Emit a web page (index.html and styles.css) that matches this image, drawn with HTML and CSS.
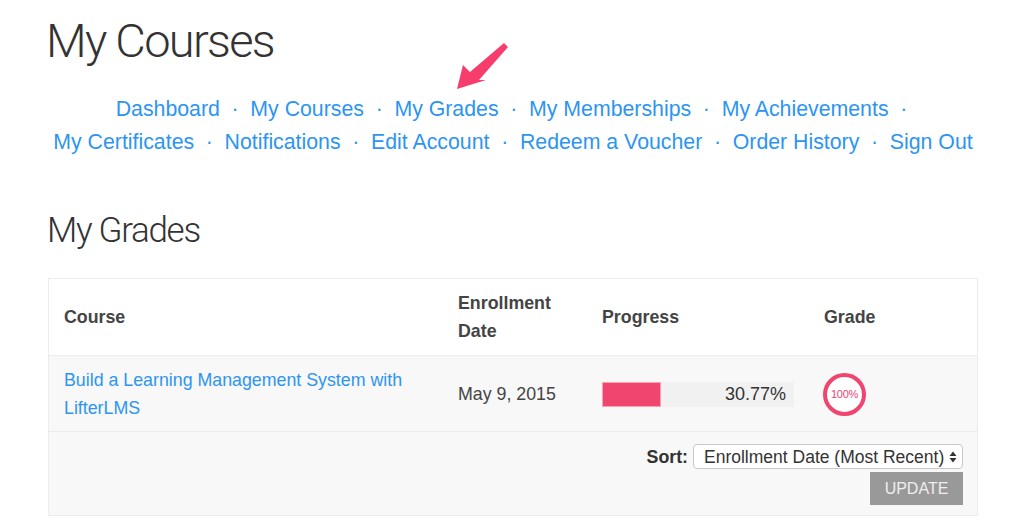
FILE: index.html
```html
<!DOCTYPE html>
<html>
<head>
<meta charset="utf-8">
<link rel="stylesheet" href="styles.css">
</head>
<body>
<div class="page">
  <h1 class="title">My Courses</h1>
  <nav class="nav">
    <a href="#">Dashboard</a><span class="sep">·</span><a href="#">My Courses</a><span class="sep">·</span><a href="#">My Grades</a><span class="sep">·</span><a href="#">My Memberships</a><span class="sep">·</span><a href="#">My Achievements</a><span class="sep sep-end">·</span><br>
    <a href="#">My Certificates</a><span class="sep">·</span><a href="#">Notifications</a><span class="sep">·</span><a href="#">Edit Account</a><span class="sep">·</span><a href="#">Redeem a Voucher</a><span class="sep">·</span><a href="#">Order History</a><span class="sep">·</span><a href="#">Sign Out</a>
  </nav>
  <h2 class="subtitle">My Grades</h2>
  <table class="grades">
    <thead>
      <tr>
        <th class="c-course">Course</th>
        <th class="c-date">Enrollment Date</th>
        <th class="c-progress">Progress</th>
        <th class="c-grade">Grade</th>
      </tr>
    </thead>
    <tbody>
      <tr>
        <td><a href="#">Build a Learning Management System with LifterLMS</a></td>
        <td>May 9, 2015</td>
        <td>
          <div class="bar"><div class="fill" style="width:30.77%"></div><span class="pct">30.77%</span></div>
        </td>
        <td><div class="ring">100%</div></td>
      </tr>
    </tbody>
    <tfoot>
      <tr>
        <td colspan="4">
          <div class="sortrow">
            <span class="sortlabel">Sort:</span>
            <span class="selectwrap">
              <select class="select"><option>Enrollment Date (Most Recent)</option></select>
              <svg class="updown" width="8" height="12" viewBox="0 0 8 12"><path d="M4 0.5 L7.5 5 H0.5 Z M4 11.5 L7.5 7 H0.5 Z" fill="#333"/></svg>
            </span>
          </div>
          <div class="btnrow"><button class="update">UPDATE</button></div>
        </td>
      </tr>
    </tfoot>
  </table>
</div>
<svg class="arrow" width="1024" height="120" viewBox="0 0 1024 120">
  <polygon points="457,89 463,65 470,72 504,43 508,47 479,80 486,80" fill="#f73d6c"/>
</svg>
</body>
</html>
```
FILE: styles.css
```css
html, body {
  margin: 0;
  padding: 0;
  background: #fff;
}
body {
  font-family: "Liberation Sans", Arial, sans-serif;
  color: #444;
  position: relative;
}
.page {
  width: 930px;
  margin-left: 48px;
  padding-top: 12px;
}
.title {
  font-family: Roboto, "Liberation Sans", sans-serif;
  font-weight: 300;
  font-size: 47px;
  line-height: 58px;
  margin: 0 0 23px -2px;
  color: #333;
  letter-spacing: -1.7px;
}
.nav {
  text-align: center;
  font-size: 21.3px;
  line-height: 33px;
}
.nav a {
  color: #2d95f1;
  text-decoration: none;
}
.sep {
  color: #2d95f1;
  padding: 0 11.7px;
}
.sep-end {
  padding-right: 3px;
}
.subtitle {
  font-family: Roboto, "Liberation Sans", sans-serif;
  font-weight: 300;
  font-size: 35px;
  line-height: 44px;
  margin: 50px 0 25px -1px;
  color: #333;
  letter-spacing: -1.3px;
}
.grades {
  width: 930px;
  border-collapse: collapse;
  border: 1px solid #ececec;
  font-size: 17.8px;
  line-height: 28px;
}
.grades th {
  text-align: left;
  font-weight: bold;
  padding: 10px 15px;
  height: 56px;
  background: #fff;
  color: #444;
}
.c-course { width: 364px; }
.c-date { width: 114px; }
.c-progress { width: 190px; }
.grades tbody td {
  background: #f8f8f8;
  padding: 10px 15px 9px;
  border-top: 1px solid #ececec;
  vertical-align: middle;
  color: #444;
}
.grades tbody a {
  color: #2d95f1;
  text-decoration: none;
}
.bar {
  position: relative;
  width: 192px;
  height: 25px;
  background: #f1f1f1;
  display: flex;
  align-items: center;
}
.fill {
  position: absolute;
  left: 0;
  top: 0;
  bottom: 0;
  background: #f0456f;
  border: 1px solid #f9a2b8;
  box-sizing: border-box;
}
.pct {
  margin-left: auto;
  padding-right: 8px;
  font-size: 18px;
  color: #333;
}
.ring {
  width: 43px;
  height: 43px;
  box-sizing: border-box;
  border: 4px solid #f0456f;
  border-radius: 50%;
  background: #fff;
  color: #f0456f;
  font-size: 11px;
  letter-spacing: -0.3px;
  display: flex;
  align-items: center;
  justify-content: center;
  margin-left: -1px;
}
.grades tfoot td {
  background: #f8f8f8;
  border-top: 1px solid #ececec;
  padding: 12px 14px 10px 15px;
}
.sortrow {
  display: flex;
  justify-content: flex-end;
  align-items: center;
  gap: 5px;
  height: 25px;
}
.sortlabel {
  font-weight: bold;
  color: #333;
}
.selectwrap {
  position: relative;
  display: block;
  height: 25px;
}
.select {
  appearance: none;
  -webkit-appearance: none;
  display: block;
  font-family: "Liberation Sans", Arial, sans-serif;
  font-size: 17.5px;
  color: #333;
  background: #fff;
  border: 1px solid #c8c8c8;
  border-radius: 4px;
  height: 25px;
  width: 270px;
  padding: 0 18px 0 10px;
  margin: 0;
}
.updown {
  position: absolute;
  right: 6px;
  top: 7px;
}
.btnrow {
  display: flex;
  justify-content: flex-end;
  margin-top: 3px;
  height: 33px;
}
.update {
  background: #999;
  color: #eee;
  border: none;
  font-family: "Liberation Sans", Arial, sans-serif;
  font-size: 16px;
  width: 93px;
  height: 33px;
  padding: 0;
}
.arrow {
  position: absolute;
  left: 0;
  top: 0;
  pointer-events: none;
}
```
